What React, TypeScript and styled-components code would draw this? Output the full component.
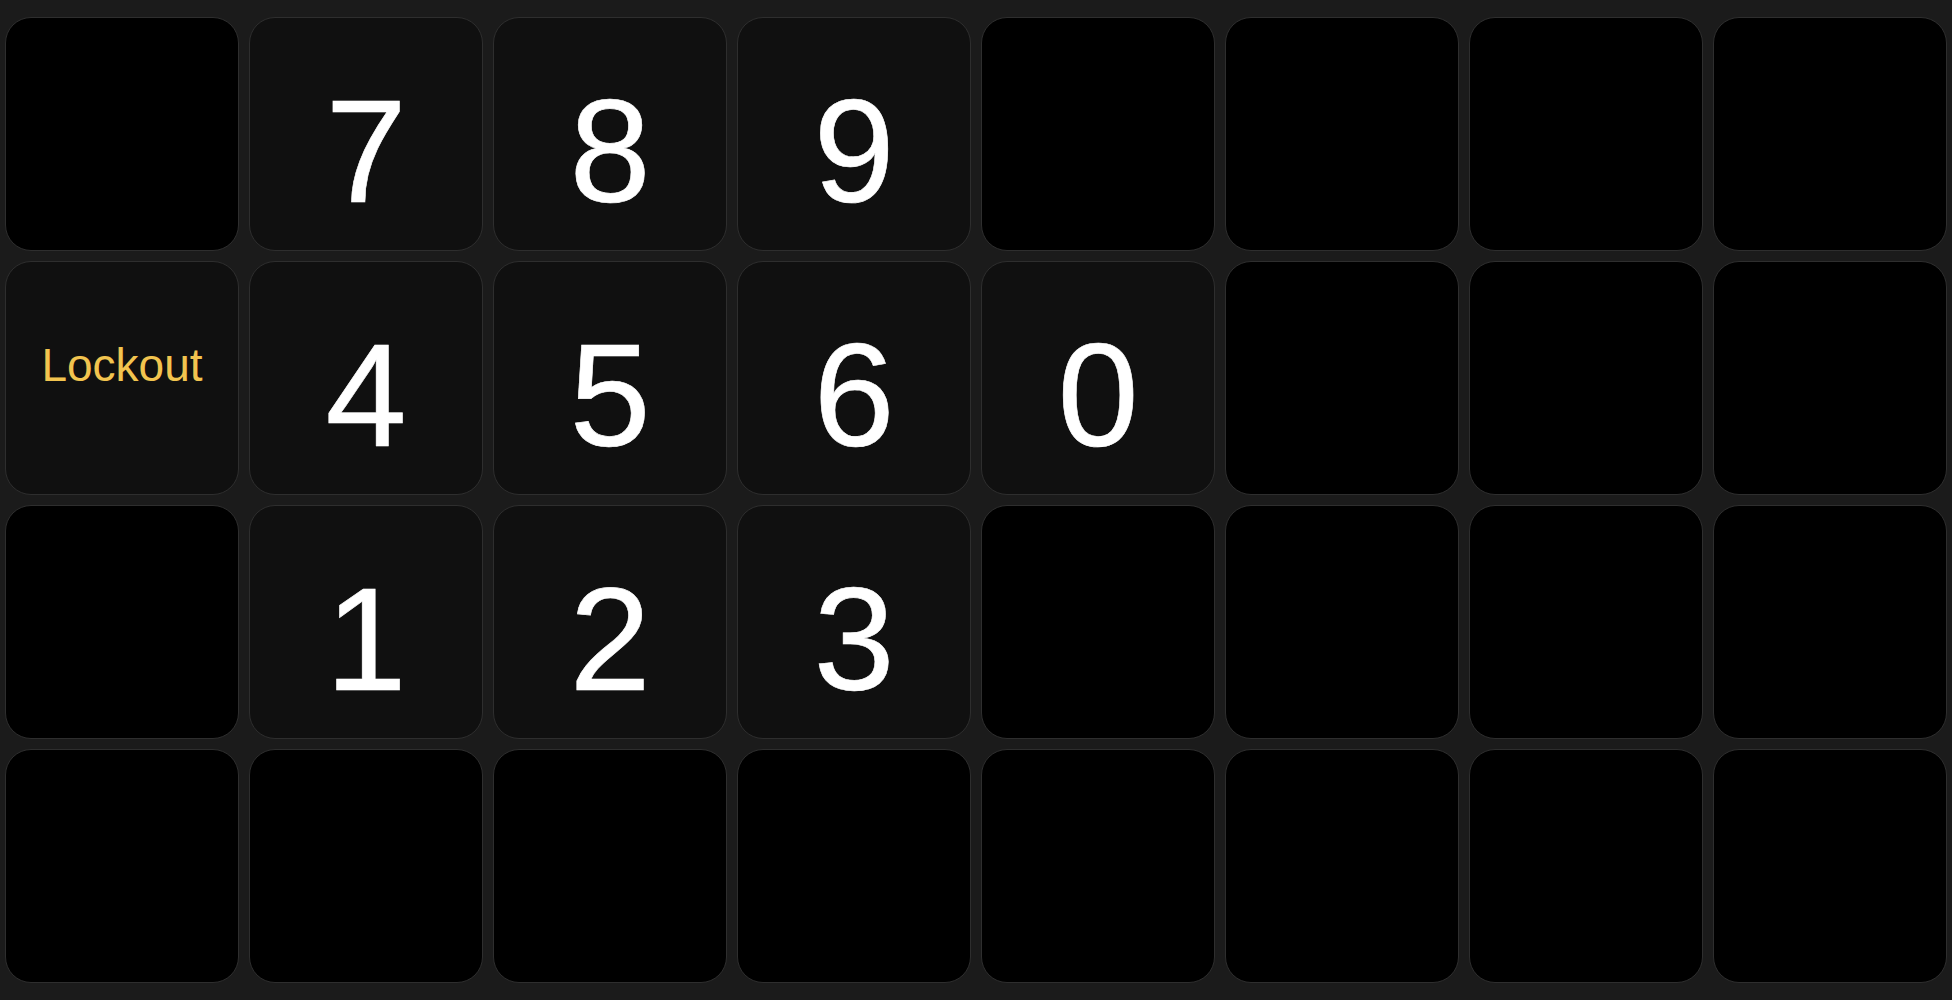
import React from "react";
import styled, { createGlobalStyle } from "styled-components";

// ── Global ───────────────────────────────────────────────────────

const GlobalStyle = createGlobalStyle`
  html, body {
    margin: 0;
    padding: 0;
    background: #1b1b1b;
    font-family: "Liberation Sans", Arial, sans-serif;
  }
`;

// ── Styled ───────────────────────────────────────────────────────

const Board = styled.div`
  box-sizing: border-box;
  height: 100vh;
  padding: 0 5px;
  display: grid;
  grid-template-columns: repeat(8, 1fr);
  grid-auto-rows: 234px;
  align-content: center;
  gap: 10px;
`;

const Cell = styled.div<{ $filled: boolean }>`
  box-sizing: border-box;
  display: flex;
  align-items: center;
  justify-content: center;
  border: 1.5px solid #2e2e2e;
  border-radius: 26px;
  background: ${({ $filled }) => ($filled ? "#101010" : "#000")};
  user-select: none;
`;

const Digit = styled.span`
  padding-top: 36px;
  font-size: 146px;
  line-height: 1;
  color: #ffffff;
  -webkit-text-stroke: 0.6px #ffffff;
`;

const Label = styled.span`
  padding-bottom: 26px;
  font-size: 46px;
  line-height: 1;
  color: #f2c44f;
`;

// ── Data ─────────────────────────────────────────────────────────

type Key = { kind: "empty" } | { kind: "digit"; value: string } | { kind: "label"; text: string };

const E: Key = { kind: "empty" };
const d = (value: string): Key => ({ kind: "digit", value });

const LAYOUT: Key[][] = [
  [E, d("7"), d("8"), d("9"), E, E, E, E],
  [{ kind: "label", text: "Lockout" }, d("4"), d("5"), d("6"), d("0"), E, E, E],
  [E, d("1"), d("2"), d("3"), E, E, E, E],
  [E, E, E, E, E, E, E, E],
];

// ── Component ────────────────────────────────────────────────────

export default function App() {
  return (
    <>
      <GlobalStyle />
      <Board>
        {LAYOUT.flatMap((row, r) =>
          row.map((key, c) => (
            <Cell key={`${r}-${c}`} $filled={key.kind !== "empty"}>
              {key.kind === "digit" && <Digit>{key.value}</Digit>}
              {key.kind === "label" && <Label>{key.text}</Label>}
            </Cell>
          ))
        )}
      </Board>
    </>
  );
}
